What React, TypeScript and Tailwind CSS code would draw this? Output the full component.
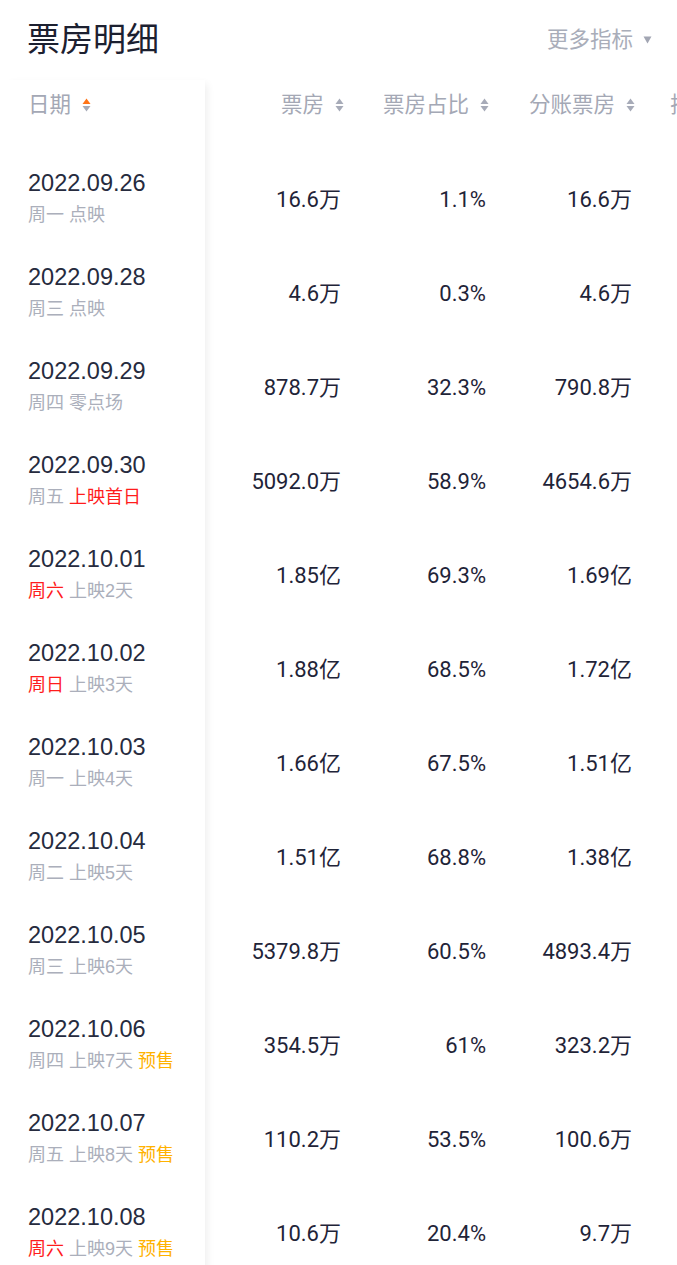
import React from "react";

type Tag = { t: string; c: "gray" | "red" | "orange" };
type Row = { date: string; sub: Tag[]; a: string; b: string; c: string };

const rows: Row[] = [
  { date: "2022.09.26", sub: [{ t: "周一", c: "gray" }, { t: "点映", c: "gray" }], a: "16.6万", b: "1.1%", c: "16.6万" },
  { date: "2022.09.28", sub: [{ t: "周三", c: "gray" }, { t: "点映", c: "gray" }], a: "4.6万", b: "0.3%", c: "4.6万" },
  { date: "2022.09.29", sub: [{ t: "周四", c: "gray" }, { t: "零点场", c: "gray" }], a: "878.7万", b: "32.3%", c: "790.8万" },
  { date: "2022.09.30", sub: [{ t: "周五", c: "gray" }, { t: "上映首日", c: "red" }], a: "5092.0万", b: "58.9%", c: "4654.6万" },
  { date: "2022.10.01", sub: [{ t: "周六", c: "red" }, { t: "上映2天", c: "gray" }], a: "1.85亿", b: "69.3%", c: "1.69亿" },
  { date: "2022.10.02", sub: [{ t: "周日", c: "red" }, { t: "上映3天", c: "gray" }], a: "1.88亿", b: "68.5%", c: "1.72亿" },
  { date: "2022.10.03", sub: [{ t: "周一", c: "gray" }, { t: "上映4天", c: "gray" }], a: "1.66亿", b: "67.5%", c: "1.51亿" },
  { date: "2022.10.04", sub: [{ t: "周二", c: "gray" }, { t: "上映5天", c: "gray" }], a: "1.51亿", b: "68.8%", c: "1.38亿" },
  { date: "2022.10.05", sub: [{ t: "周三", c: "gray" }, { t: "上映6天", c: "gray" }], a: "5379.8万", b: "60.5%", c: "4893.4万" },
  { date: "2022.10.06", sub: [{ t: "周四", c: "gray" }, { t: "上映7天", c: "gray" }, { t: "预售", c: "orange" }], a: "354.5万", b: "61%", c: "323.2万" },
  { date: "2022.10.07", sub: [{ t: "周五", c: "gray" }, { t: "上映8天", c: "gray" }, { t: "预售", c: "orange" }], a: "110.2万", b: "53.5%", c: "100.6万" },
  { date: "2022.10.08", sub: [{ t: "周六", c: "red" }, { t: "上映9天", c: "gray" }, { t: "预售", c: "orange" }], a: "10.6万", b: "20.4%", c: "9.7万" },
];

const cjk = "font-['Liberation_Sans','Noto_Sans_CJK_SC',sans-serif]";
const num = "font-['Roboto','Noto_Sans_CJK_SC',sans-serif]";

function SortIcon({ active }: { active?: boolean }) {
  return (
    <svg width="9" height="14" viewBox="0 0 9 14" className="shrink-0">
      <path d="M4.5 0.5 L8.5 6 L0.5 6 Z" fill={active ? "#ff7417" : "#a7abb8"} />
      <path d="M4.5 13.5 L8.5 8 L0.5 8 Z" fill="#a7abb8" />
    </svg>
  );
}

function HeadCell({ label, w }: { label: string; w: string }) {
  return (
    <div className={`${w} shrink-0 flex justify-end items-center gap-[11px] pr-[1px]`}>
      <span className="text-[21.5px] leading-[30px] text-[#a4a8b5] whitespace-nowrap">{label}</span>
      <SortIcon />
    </div>
  );
}

const tagColor = {
  gray: "text-[#abafbb]",
  red: "text-[#ff1c1c]",
  orange: "text-[#ffb200]",
};

export default function App() {
  return (
    <div className={`w-[677px] h-[1265px] overflow-hidden bg-white ${cjk}`}>
      <div className="h-[80px] flex items-center justify-between pl-[27px] pr-[25px]">
        <div className="text-[33px] leading-[40px] font-normal text-[#1c2030]">票房明细</div>
        <div className="flex items-center gap-[10px]">
          <span className="text-[21.5px] text-[#a9adb9]">更多指标</span>
          <svg width="9" height="8" viewBox="0 0 9 8">
            <path d="M0.5 0.5 L8.5 0.5 L4.5 7.5 Z" fill="#a2a6b3" />
          </svg>
        </div>
      </div>

      <div className="flex">
        {/* fixed date column */}
        <div className="w-[205px] shrink-0 relative z-10 bg-white shadow-[6px_0_8px_-4px_rgba(0,0,0,0.07)]">
          <div className="h-[72px] pl-[28px] pt-[10px]">
            <div className="flex items-center gap-[11px] h-[30px]">
              <span className="text-[21.5px] leading-[30px] text-[#a4a8b5]">日期</span>
              <SortIcon active />
            </div>
          </div>
          {rows.map((r) => (
            <div key={r.date} className="h-[94px] pl-[28px] flex flex-col justify-center">
              <div className="text-[23.5px] leading-[28px] text-[#262b3e]">{r.date}</div>
              <div className="mt-[4px] text-[18px] leading-[28px] flex gap-[5px]">
                {r.sub.map((s, i) => (
                  <span key={i} className={tagColor[s.c]}>{s.t}</span>
                ))}
              </div>
            </div>
          ))}
        </div>

        {/* scrollable metric columns */}
        <div className="flex flex-col">
          <div className="flex h-[72px] pt-[10px]">
            <div className="flex h-[30px]">
              <HeadCell label="票房" w="w-[140px]" />
              <HeadCell label="票房占比" w="w-[145px]" />
              <HeadCell label="分账票房" w="w-[146px]" />
              <HeadCell label="排片场次" w="w-[141px]" />
            </div>
          </div>
          {rows.map((r) => (
            <div key={r.date} className={`flex h-[94px] items-center ${num} text-[22px] text-[#1f2438]`}>
              <div className="w-[140px] shrink-0 text-right pr-[4px]">{r.a}</div>
              <div className="w-[145px] shrink-0 text-right pr-[4px]">{r.b}</div>
              <div className="w-[146px] shrink-0 text-right pr-[4px]">{r.c}</div>
              <div className="w-[141px] shrink-0" />
            </div>
          ))}
        </div>
      </div>
    </div>
  );
}
